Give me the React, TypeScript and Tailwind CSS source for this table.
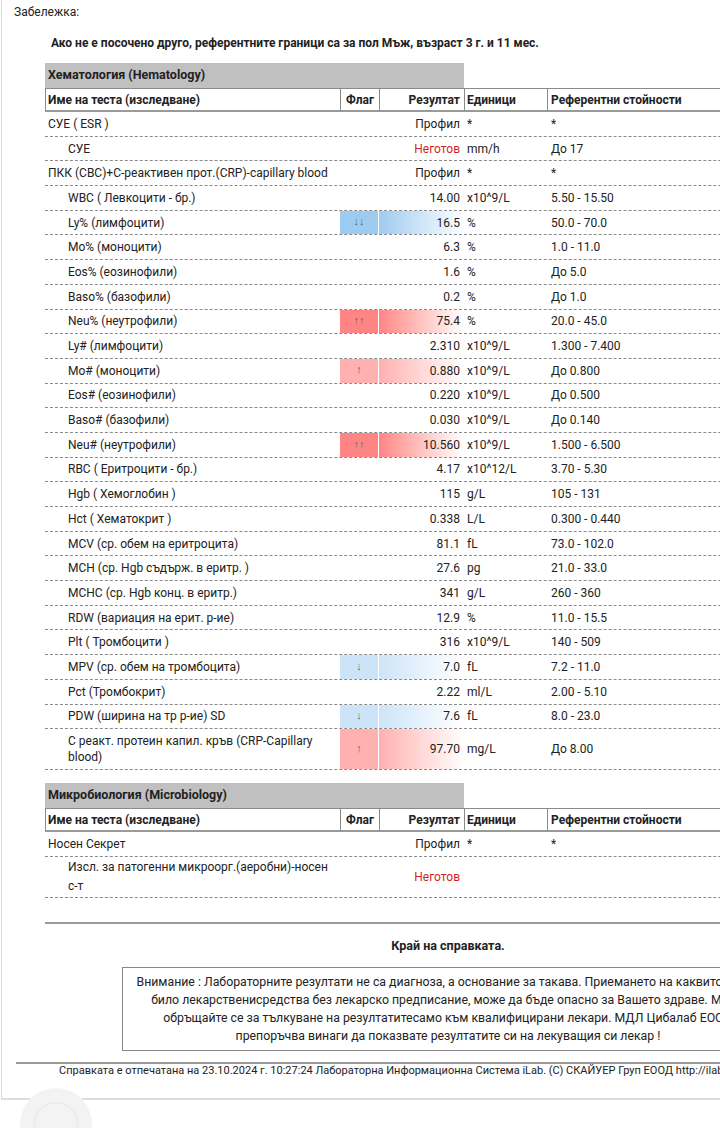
import React from "react";

type Row = {
  name: React.ReactNode;
  level: number;
  flag?: "L" | "LL" | "H" | "HH";
  result: string;
  red?: boolean;
  unit: string;
  ref: string;
  tall?: boolean;
};

const hem: Row[] = [
  { name: "СУЕ ( ESR )", level: 0, result: "Профил", unit: "*", ref: "*" },
  { name: "СУЕ", level: 1, result: "Неготов", red: true, unit: "mm/h", ref: "До 17" },
  { name: "ПКК (CBC)+С-реактивен прот.(CRP)-capillary blood", level: 0, result: "Профил", unit: "*", ref: "*" },
  { name: "WBC ( Левкоцити - бр.)", level: 1, result: "14.00", unit: "x10^9/L", ref: "5.50 - 15.50" },
  { name: "Ly% (лимфоцити)", level: 1, flag: "LL", result: "16.5", unit: "%", ref: "50.0 - 70.0" },
  { name: "Mo% (моноцити)", level: 1, result: "6.3", unit: "%", ref: "1.0 - 11.0" },
  { name: "Eos% (еозинофили)", level: 1, result: "1.6", unit: "%", ref: "До 5.0" },
  { name: "Baso% (базофили)", level: 1, result: "0.2", unit: "%", ref: "До 1.0" },
  { name: "Neu% (неутрофили)", level: 1, flag: "HH", result: "75.4", unit: "%", ref: "20.0 - 45.0" },
  { name: "Ly# (лимфоцити)", level: 1, result: "2.310", unit: "x10^9/L", ref: "1.300 - 7.400" },
  { name: "Mo# (моноцити)", level: 1, flag: "H", result: "0.880", unit: "x10^9/L", ref: "До 0.800" },
  { name: "Eos# (еозинофили)", level: 1, result: "0.220", unit: "x10^9/L", ref: "До 0.500" },
  { name: "Baso# (базофили)", level: 1, result: "0.030", unit: "x10^9/L", ref: "До 0.140" },
  { name: "Neu# (неутрофили)", level: 1, flag: "HH", result: "10.560", unit: "x10^9/L", ref: "1.500 - 6.500" },
  { name: "RBC ( Еритроцити - бр.)", level: 1, result: "4.17", unit: "x10^12/L", ref: "3.70 - 5.30" },
  { name: "Hgb ( Хемоглобин )", level: 1, result: "115", unit: "g/L", ref: "105 - 131" },
  { name: "Hct ( Хематокрит )", level: 1, result: "0.338", unit: "L/L", ref: "0.300 - 0.440" },
  { name: "MCV (ср. обем на еритроцита)", level: 1, result: "81.1", unit: "fL", ref: "73.0 - 102.0" },
  { name: "MCH (ср. Hgb съдърж. в еритр. )", level: 1, result: "27.6", unit: "pg", ref: "21.0 - 33.0" },
  { name: "MCHC (ср. Hgb конц. в еритр.)", level: 1, result: "341", unit: "g/L", ref: "260 - 360" },
  { name: "RDW (вариация на ерит. р-ие)", level: 1, result: "12.9", unit: "%", ref: "11.0 - 15.5" },
  { name: "Plt ( Тромбоцити )", level: 1, result: "316", unit: "x10^9/L", ref: "140 - 509" },
  { name: "MPV (ср. обем на тромбоцита)", level: 1, flag: "L", result: "7.0", unit: "fL", ref: "7.2 - 11.0" },
  { name: "Pct (Тромбокрит)", level: 1, result: "2.22", unit: "ml/L", ref: "2.00 - 5.10" },
  { name: "PDW (ширина на тр р-ие) SD", level: 1, flag: "L", result: "7.6", unit: "fL", ref: "8.0 - 23.0" },
  {
    name: (
      <>
        С реакт. протеин капил. кръв (CRP-Capillary
        <br />
        blood)
      </>
    ),
    level: 1,
    flag: "H",
    result: "97.70",
    unit: "mg/L",
    ref: "До 8.00",
    tall: true,
  },
];

const flagStyles: Record<string, { cell: string; grad: string; arrow: string }> = {
  LL: { cell: "bg-[#9ecbf0]", grad: "bg-gradient-to-r from-[#9ecbf0] to-white", arrow: "↓↓" },
  L: { cell: "bg-[#cde4f8]", grad: "bg-gradient-to-r from-[#cde4f8] to-white", arrow: "↓" },
  HH: { cell: "bg-[#ff8585]", grad: "bg-gradient-to-r from-[#ff8585] to-white", arrow: "↑↑" },
  H: { cell: "bg-[#ffb0b0]", grad: "bg-gradient-to-r from-[#ffb0b0] to-white", arrow: "↑" },
};

const cols = "grid grid-cols-[295px_39px_85px_83px_304px]";

function DataRow({ r }: { r: Row }) {
  const f = r.flag ? flagStyles[r.flag] : null;
  return (
    <div
      className={`${cols} border-b border-dashed border-[#8a8a8a] ${
        r.tall ? "h-[41px]" : "h-[24.7px]"
      }`}
    >
      <div
        className={`flex items-center ${r.level ? "pl-[23px]" : "pl-[3px]"} ${
          r.tall ? "leading-[16px]" : ""
        }`}
      >
        <span>{r.name}</span>
      </div>
      <div
        className={`flex items-center justify-center text-[11px] text-[#666] ${
          f ? f.cell + " border-r border-white" : ""
        }`}
      >
        {f ? f.arrow : ""}
      </div>
      <div
        className={`flex items-center justify-end pr-[4px] ${f ? f.grad : ""} ${
          r.red ? "text-[#d21f1f]" : ""
        }`}
      >
        {r.result}
      </div>
      <div className="flex items-center pl-[3px]">{r.unit}</div>
      <div className="flex items-center pl-[4px]">{r.ref}</div>
    </div>
  );
}

function Section({ title }: { title: string }) {
  return (
    <>
      <div className="w-[419px] h-[25px] bg-[#c0c0c0] flex items-center pl-[3px] font-bold text-[12.5px]">
        {title}
      </div>
      <div
        className={`${cols} h-[24px] border-t border-l border-[#8a8a8a] border-b-2 border-b-[#9a9a9a] font-bold`}
      >
        <div className="flex items-center pl-[2px] border-r border-[#8a8a8a]">Име на теста (изследване)</div>
        <div className="flex items-center justify-center border-r border-[#8a8a8a]">Флаг</div>
        <div className="flex items-center justify-end pr-[4px] border-r border-[#8a8a8a]">Резултат</div>
        <div className="flex items-center pl-[2px] border-r border-[#8a8a8a]">Единици</div>
        <div className="flex items-center pl-[3px]">Референтни стойности</div>
      </div>
    </>
  );
}

export default function App() {
  return (
    <div className="relative w-[720px] h-[1128px] overflow-hidden bg-white text-[12px] text-[#222] font-['Roboto',sans-serif]">
      <div className="w-[1000px] ml-[1px] border-l border-b-2 border-[#dedede] pb-[20px]">
        <div className="pl-[12px] pt-[4px] h-[23px] leading-[16px] text-[12px]">Забележка:</div>
        <div className="pl-[49px] pt-[11px] h-[40px] font-bold text-[12px]">
          Ако не е посочено друго, референтните граници са за пол Мъж, възраст 3 г. и 11 мес.
        </div>
        <div className="ml-[43px] w-[806px]">
          <Section title="Хематология (Hematology)" />
          {hem.map((r, i) => (
            <DataRow key={i} r={r} />
          ))}
          <div className="h-[13px]" />
          <Section title="Микробиология (Microbiology)" />
          <DataRow r={{ name: "Носен Секрет", level: 0, result: "Профил", unit: "*", ref: "*" }} />
          <div className={`${cols} h-[41px] border-b border-dashed border-[#8a8a8a]`}>
            <div className="flex items-center pl-[23px] leading-[19px]">
              <span>
                Изсл. за патогенни микроорг.(аеробни)-носен
                <br />
                с-т
              </span>
            </div>
            <div />
            <div className="flex items-center justify-end pr-[4px] text-[#d21f1f]">Неготов</div>
            <div />
            <div />
          </div>
          <div className="h-[24px]" />
          <div className="border-t-2 border-[#9a9a9a]" />
          <div className="pt-[14px] text-center font-bold text-[12.5px] leading-[16px]">Край на справката.</div>
          <div className="mt-[13px] mx-auto w-[652px] border border-[#888] py-[5px] px-[12px] text-center leading-[18px] text-[12.3px]">
            Внимание : Лабораторните резултати не са диагноза, а основание за такава. Приемането на каквито и да е
            <br />
            било лекарственисредства без лекарско предписание, може да бъде опасно за Вашето здраве. Моля,
            <br />
            обръщайте се за тълкуване на резултатитесамо към квалифицирани лекари. МДЛ Цибалаб ЕООД
            <br />
            препоръчва винаги да показвате резултатите си на лекуващия си лекар !
          </div>
        </div>
        <div className="mt-[11px] ml-[14px] border-t-2 border-[#9a9a9a] pt-0 pl-[43px] text-[11px] leading-[14px] whitespace-nowrap">
          Справката е отпечатана на 23.10.2024 г. 10:27:24 Лабораторна Информационна Система iLab. (C) СКАЙУЕР Груп ЕООД http://ilab.bg
        </div>
      </div>
      <div className="absolute left-[20px] top-[1088px] w-[72px] h-[72px] rounded-full bg-[#f3f3f3] flex items-center justify-center">
        <div className="w-[44px] h-[44px] rounded-full border border-[#e6e6e6]" />
      </div>
    </div>
  );
}
